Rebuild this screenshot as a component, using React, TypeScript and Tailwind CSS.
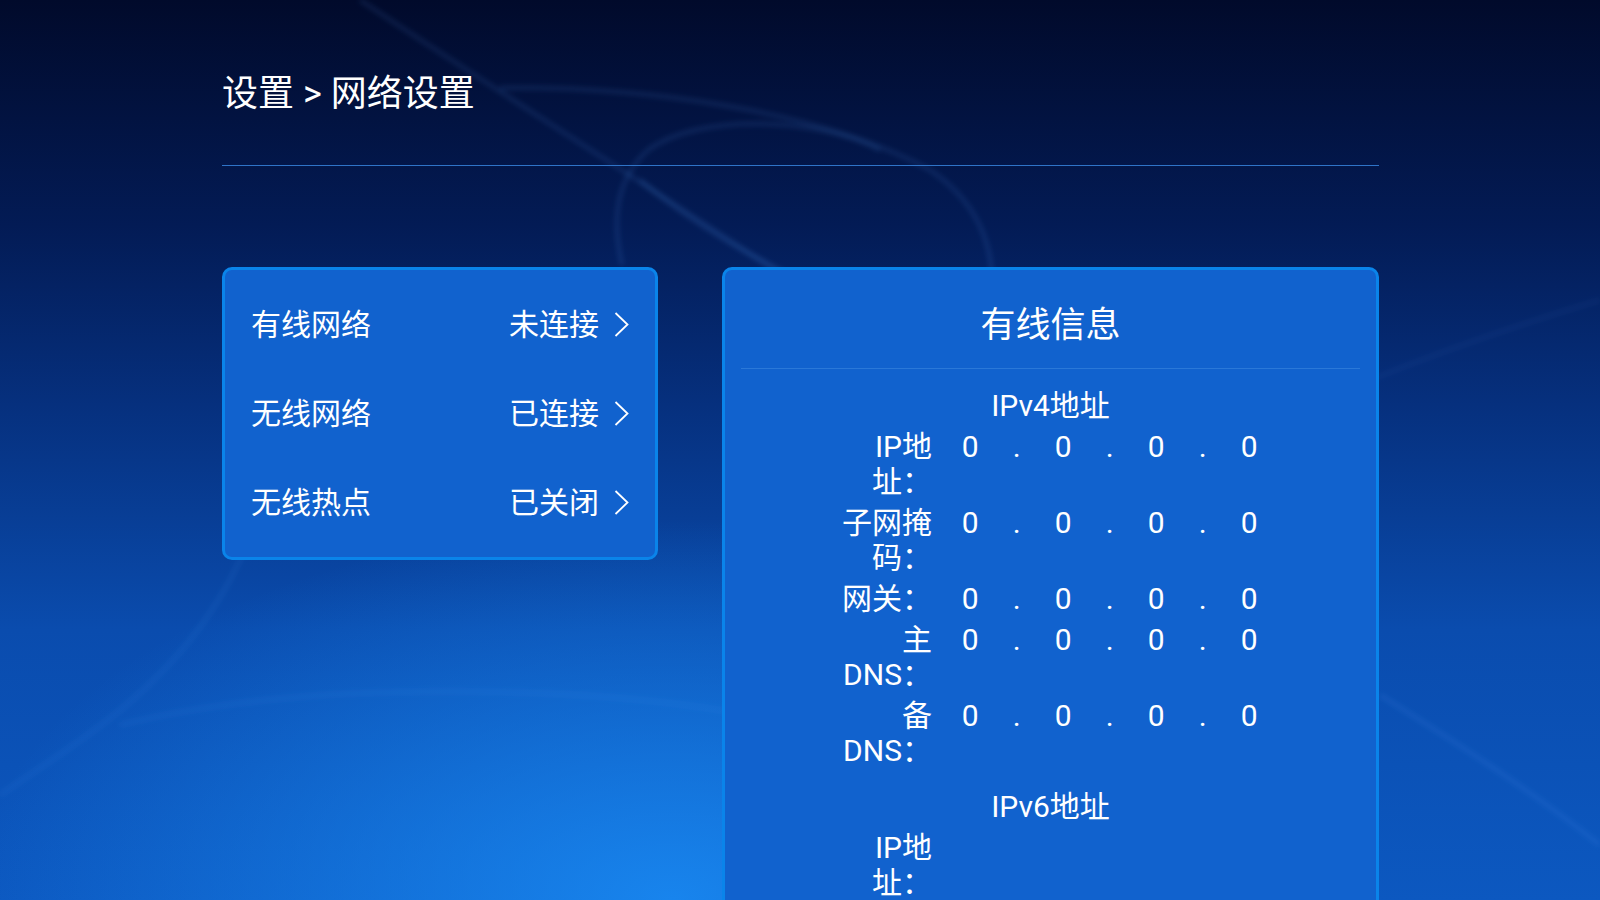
import React from 'react';

const font = { fontFamily: '"Roboto", "Noto Sans CJK SC", sans-serif' };

function Chevron() {
  return (
    <svg width="15" height="25" viewBox="0 0 15 25" className="ml-[15px] shrink-0">
      <path d="M1.5 1 L13.5 12.5 L1.5 24" fill="none" stroke="white" strokeWidth="1.8" />
    </svg>
  );
}

function Swirls() {
  return (
    <svg className="absolute inset-0 pointer-events-none" width="1600" height="900" viewBox="0 0 1600 900">
      <defs>
        <filter id="soft" x="-10%" y="-10%" width="120%" height="120%">
          <feGaussianBlur stdDeviation="2.5" />
        </filter>
      </defs>
      <g fill="none" stroke="#5aa0ff" strokeOpacity="0.11" strokeWidth="5" filter="url(#soft)">
        <path d="M360 0 C480 80 640 180 820 300" />
        <path d="M500 88 C640 86 820 110 930 170 C975 200 990 240 992 275" />
        <path d="M648 150 C700 112 820 118 880 150" />
        <path d="M622 265 C612 220 615 180 648 150" />
        <path d="M640 180 C700 230 760 260 790 275" />
        <path d="M0 795 C80 740 170 690 230 580 C255 530 270 500 290 470" strokeOpacity="0.08" />
        <path d="M120 725 C260 690 420 688 560 694 C640 698 720 708 780 722" strokeOpacity="0.08" />
        <path d="M1380 695 C1460 745 1530 790 1600 845" />
        <path d="M1370 380 C1420 360 1500 330 1600 300" strokeOpacity="0.05" />
      </g>
    </svg>
  );
}

const rows = [
  { name: '有线网络', status: '未连接' },
  { name: '无线网络', status: '已连接' },
  { name: '无线热点', status: '已关闭' },
];

const ipv4 = ['IP地址：', '子网掩码：', '网关：', '主DNS：', '备DNS：'];

function InfoRow({ label, values }: { label: string; values: boolean }) {
  return (
    <div className="flex items-start gap-[15px] ml-[116px] mt-[6px]">
      <div className="w-[91px] text-right">{label}</div>
      {values && (
        <div className="flex">
          {['0', '.', '0', '.', '0', '.', '0'].map((v, i) => (
            <div key={i} className="w-[46.5px] text-center">
              {v}
            </div>
          ))}
        </div>
      )}
    </div>
  );
}

export default function App() {
  return (
    <div
      className="relative w-[1600px] h-[900px] overflow-hidden text-white bg-[linear-gradient(180deg,#010a2b_0%,#031b55_25%,#06307e_45%,#0a4cae_70%,#0c58c0_100%)]"
      style={font}
    >
      <div className="absolute inset-0 bg-[radial-gradient(ellipse_700px_380px_at_42%_100%,rgba(26,140,245,0.85),rgba(26,140,245,0)_100%)]" />
      <Swirls />

      <div className="relative pl-[222px] pr-[221px]">
        {/* Header */}
        <div className="pt-[73px] text-[36px] leading-[42px]">设置 &gt; 网络设置</div>
        <div className="mt-[50px] h-px bg-[#2f74c8]" />

        <div className="flex items-start gap-[64px] mt-[101px]">
          {/* Menu */}
          <div className="w-[436px] h-[293px] rounded-[10px] border-[3px] border-[#0a84ea] bg-[#1162ce] py-[10px] px-[26px]">
            {rows.map((r) => (
              <div key={r.name} className="flex items-center h-[89px] text-[30px] leading-[35px]">
                <span className="flex-1">{r.name}</span>
                <span>{r.status}</span>
                <Chevron />
              </div>
            ))}
          </div>

          {/* Wired info */}
          <div className="flex-1 h-[680px] rounded-[10px] border-[3px] border-[#0a84ea] bg-[#1162ce]">
            <div className="pt-[36px] text-center text-[35px] leading-[40px]">有线信息</div>
            <div className="mt-[22px] mx-[16px] h-px bg-[#2a78d8]" />
            <div className="text-[30px] leading-[35px]">
              <div className="mt-[19px] text-center">IPv4地址</div>
              {ipv4.map((l) => (
                <InfoRow key={l} label={l} values />
              ))}
              <div className="mt-[21px] text-center">IPv6地址</div>
              <InfoRow label="IP地址：" values={false} />
            </div>
          </div>
        </div>
      </div>
    </div>
  );
}
